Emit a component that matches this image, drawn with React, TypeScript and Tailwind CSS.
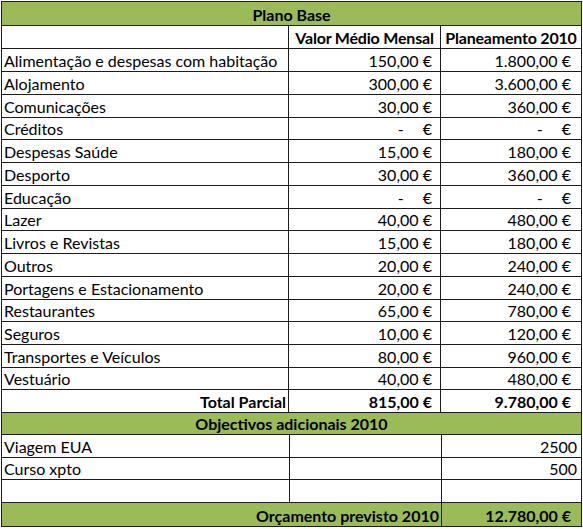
import React from "react";

type Item = { label: string; mensal: string | null; anual: string | null };

const items: Item[] = [
  { label: "Alimentação e despesas com habitação", mensal: "150,00", anual: "1.800,00" },
  { label: "Alojamento", mensal: "300,00", anual: "3.600,00" },
  { label: "Comunicações", mensal: "30,00", anual: "360,00" },
  { label: "Créditos", mensal: null, anual: null },
  { label: "Despesas Saúde", mensal: "15,00", anual: "180,00" },
  { label: "Desporto", mensal: "30,00", anual: "360,00" },
  { label: "Educação", mensal: null, anual: null },
  { label: "Lazer", mensal: "40,00", anual: "480,00" },
  { label: "Livros e Revistas", mensal: "15,00", anual: "180,00" },
  { label: "Outros", mensal: "20,00", anual: "240,00" },
  { label: "Portagens e Estacionamento", mensal: "20,00", anual: "240,00" },
  { label: "Restaurantes", mensal: "65,00", anual: "780,00" },
  { label: "Seguros", mensal: "10,00", anual: "120,00" },
  { label: "Transportes e Veículos", mensal: "80,00", anual: "960,00" },
  { label: "Vestuário", mensal: "40,00", anual: "480,00" },
];

const extras = [
  { label: "Viagem EUA", value: "2500", h: "h-[23px]" },
  { label: "Curso xpto", value: "500", h: "h-[22px]" },
  { label: "", value: "", h: "h-[23px]" },
];

// Excel accounting format: value + € or a dash when empty
const Euro = ({ value }: { value: string | null }) =>
  value === null ? (
    <span className="flex">
      <span>-</span>
      <span className="ml-[19px]">€</span>
    </span>
  ) : (
    <span>{value} €</span>
  );

const cell = "flex items-end border-r border-b border-[#1c1c1c] pb-[2px] leading-none whitespace-nowrap overflow-visible";

const App = () => {
  return (
    <div className="w-[583px] h-[529px] bg-white pt-[1px] pl-[1px] font-['Lato','Liberation_Sans',sans-serif] text-[16px] text-black">
      <div className="w-[581px] border-l border-t border-[#1c1c1c]">
        <div className={`${cell} h-[24px] justify-center bg-[#9bbb59] font-bold`}>Plano Base</div>

        <div className="grid grid-cols-[287px_152px_141px]">
          <div className={`${cell} h-[23px]`}></div>
          <div className={`${cell} h-[23px] justify-center font-bold tracking-[-0.2px]`}>Valor Médio Mensal</div>
          <div className={`${cell} h-[23px] justify-center font-bold tracking-[-0.2px]`}>Planeamento 2010</div>

          {items.map((it, i) => {
            const h = i % 4 === 3 || i === 14 ? "h-[22px]" : "h-[23px]";
            return (
              <React.Fragment key={it.label}>
                <div className={`${cell} ${h} pl-[2px]`}>{it.label}</div>
                <div className={`${cell} ${h} justify-end pr-[8px]`}>
                  <Euro value={it.mensal} />
                </div>
                <div className={`${cell} ${h} justify-end pr-[10px]`}>
                  <Euro value={it.anual} />
                </div>
              </React.Fragment>
            );
          })}

          <div className={`${cell} h-[23px] justify-end pr-[2px] font-bold`}>Total Parcial</div>
          <div className={`${cell} h-[23px] justify-end pr-[8px] font-bold`}>815,00 €</div>
          <div className={`${cell} h-[23px] justify-end pr-[10px] font-bold`}>9.780,00 €</div>
        </div>

        <div className={`${cell} h-[22px] justify-center bg-[#9bbb59] font-bold`}>
          Objectivos adicionais 2010
        </div>

        <div className="grid grid-cols-[288px_152px_140px]">
          {extras.map((e, i) => (
            <React.Fragment key={i}>
              <div className={`${cell} ${e.h} pl-[2px]`}>{e.label}</div>
              <div className={`${cell} ${e.h}`}></div>
              <div className={`${cell} ${e.h} justify-end pr-[4px]`}>{e.value}</div>
            </React.Fragment>
          ))}
          <div className={`${cell} col-span-2 h-[24px] justify-end pr-[2px] bg-[#9bbb59] font-bold`}>
            Orçamento previsto 2010
          </div>
          <div className={`${cell} h-[24px] justify-end pr-[10px] bg-[#9bbb59] font-bold`}>12.780,00 €</div>
        </div>
      </div>
    </div>
  );
};

export default App;
